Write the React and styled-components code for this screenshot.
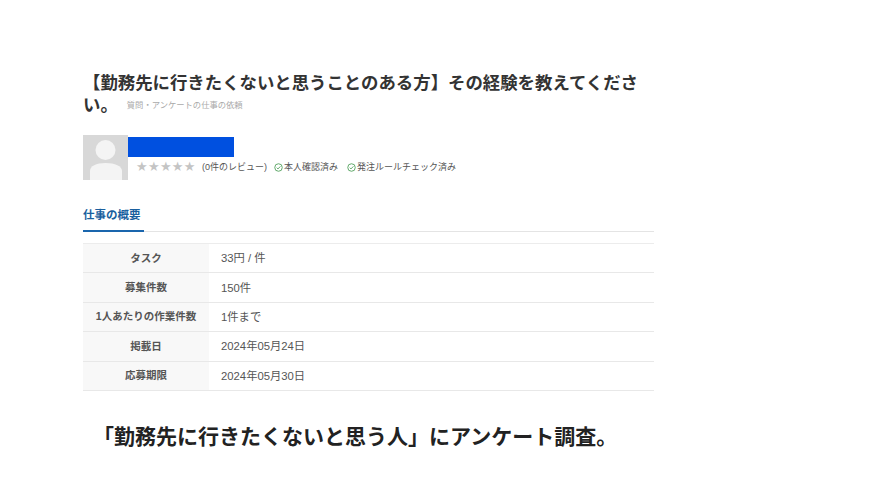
import React from 'react';
import styled, { createGlobalStyle } from 'styled-components';

const FONT = '"Liberation Sans", "Noto Sans CJK JP", sans-serif';

const Global = createGlobalStyle`
    html, body {
        margin: 0;
        background: #fff;
    }
    body {
        font-family: ${FONT};
        color: #333;
    }
`;

const Page = styled.div`
    width: 886px;
    height: 498px;
    box-sizing: border-box;
    padding: 72px 232px 0 83px;
    overflow: hidden;
`;

const Title = styled.h1`
    margin: 0;
    height: 44px;
    font-size: 17.4px;
    line-height: 22px;
    font-weight: 700;
    color: #333;
    width: 560px;
`;

const Category = styled.span`
    margin-left: 9px;
    font-size: 8.3px;
    line-height: 10px;
    font-weight: 400;
    color: #aaa;
    vertical-align: 3px;
`;

const Profile = styled.div`
    display: flex;
    margin-top: 19px;
    height: 45px;
`;

const Avatar = styled.svg`
    width: 45px;
    height: 45px;
    display: block;
    flex: none;
`;

const ProfileBody = styled.div`
    display: flex;
    flex-direction: column;
`;

const NameBar = styled.div`
    width: 106px;
    height: 20px;
    margin-top: 2px;
    background: #0050e0;
`;

const MetaRow = styled.div`
    display: flex;
    align-items: center;
    margin-top: 2px;
    padding-left: 8px;
    font-size: 9px;
    line-height: 16px;
    color: #555;
`;

const Stars = styled.span`
    font-size: 13px;
    letter-spacing: 0.3px;
    color: #c4c4c4;
    font-family: "DejaVu Sans", sans-serif;
    width: 59px;
    white-space: nowrap;
`;

const Reviews = styled.span`
    margin-left: 7px;
`;

const Badge = styled.span`
    display: inline-flex;
    align-items: center;
    gap: 1px;
    margin-left: ${({ $gap }) => $gap}px;
`;

const Check = styled.svg`
    width: 9px;
    height: 9px;
    color: #5fa868;
`;

const Tabs = styled.div`
    margin-top: 27px;
    width: 571px;
    border-bottom: 1px solid #e4e4e4;
    display: flex;
`;

const Tab = styled.div`
    font-size: 11.5px;
    font-weight: 700;
    line-height: 16px;
    color: #1a5f9e;
    padding-bottom: 7px;
    width: 61px;
    margin-bottom: -1px;
    border-bottom: 2px solid #1a66ad;
`;

const Table = styled.div`
    margin-top: 11px;
    width: 571px;
    border-top: 1px solid #ececec;
`;

const Row = styled.div`
    display: grid;
    grid-template-columns: 126px 1fr;
    height: 28.4px;
    border-bottom: 1px solid #e8e8e8;
    font-size: 10.5px;
`;

const Head = styled.div`
    background: #f8f8f8;
    display: flex;
    align-items: center;
    justify-content: center;
    padding-bottom: 2px;
    font-weight: 700;
    color: #555;
`;

const Value = styled.div`
    display: flex;
    align-items: center;
    padding: 0 0 2px 12px;
    font-size: 11.3px;
    color: #555;
`;

const Caption = styled.p`
    margin: 31px 0 0 10px;
    font-size: 21px;
    line-height: 30px;
    font-weight: 700;
    color: #222;
    white-space: nowrap;
`;

const rows = [
    ['タスク', '33円 / 件'],
    ['募集件数', '150件'],
    ['1人あたりの作業件数', '1件まで'],
    ['掲載日', '2024年05月24日'],
    ['応募期限', '2024年05月30日'],
];

const CheckIcon = () => (
    <Check viewBox="0 0 12 12" fill="none" stroke="currentColor" strokeWidth="1.3">
        <circle cx="6" cy="6" r="5" />
        <path d="M3.6 6.2 5.3 7.9 8.5 4.5" />
    </Check>
);

export default function App() {
    return (
        <Page>
            <Global />
            <Title>
                【勤務先に行きたくないと思うことのある方】その経験を教えてください。
                <Category>質問・アンケートの仕事の依頼</Category>
            </Title>
            <Profile>
                <Avatar viewBox="0 0 45 45">
                    <rect width="45" height="45" fill="#d8d8d8" />
                    <ellipse cx="22.5" cy="15" rx="10" ry="10" fill="#f4f4f4" />
                    <path d="M7 45V36C7 31 13 28 22.5 28S39 31 39 36V45Z" fill="#f4f4f4" />
                </Avatar>
                <ProfileBody>
                    <NameBar />
                    <MetaRow>
                        <Stars>★★★★★</Stars>
                        <Reviews>(0件のレビュー)</Reviews>
                        <Badge $gap={7}><CheckIcon />本人確認済み</Badge>
                        <Badge $gap={9}><CheckIcon />発注ルールチェック済み</Badge>
                    </MetaRow>
                </ProfileBody>
            </Profile>
            <Tabs>
                <Tab>仕事の概要</Tab>
            </Tabs>
            <Table>
                {rows.map(([head, value]) => (
                    <Row key={head}>
                        <Head>{head}</Head>
                        <Value>{value}</Value>
                    </Row>
                ))}
            </Table>
            <Caption>「勤務先に行きたくないと思う人」にアンケート調査。</Caption>
        </Page>
    );
}
